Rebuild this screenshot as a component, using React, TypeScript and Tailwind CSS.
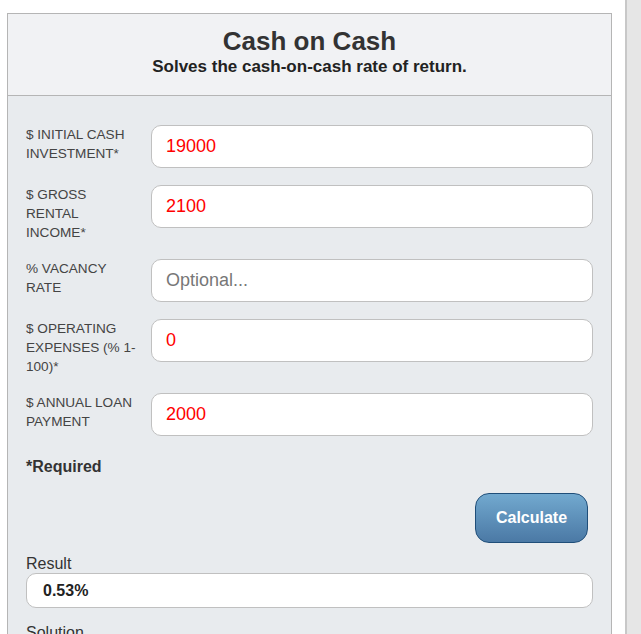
import React from 'react';

const fields = [
  { label: '$ INITIAL CASH INVESTMENT*', value: '19000' },
  { label: '$ GROSS RENTAL INCOME*', value: '2100' },
  { label: '% VACANCY RATE', value: '' },
  { label: '$ OPERATING EXPENSES (% 1-100)*', value: '0' },
  { label: '$ ANNUAL LOAN PAYMENT', value: '2000' },
];

export default function App() {
  return (
    <div
      className="flex h-[634px] w-[641px] overflow-hidden bg-white text-[#333]"
      style={{ fontFamily: '"Liberation Sans", Arial, sans-serif' }}
    >
      <div className="flex-1 pl-[7px] pt-[13px]">
        {/* calculator panel */}
        <div className="w-[605px] border border-[#b5b5b5] bg-[#e8ebee]">
          <div className="flex h-[82px] flex-col items-center border-b border-[#b5b5b5] bg-[#f1f2f4] pt-[12px]">
            <h1 className="text-[26px] font-bold leading-[30px] text-[#333]">Cash on Cash</h1>
            <p className="mt-[1px] text-[17px] font-bold leading-[20px] text-[#222]">
              Solves the cash-on-cash rate of return.
            </p>
          </div>

          <div className="px-[18px] pt-[29px]">
            {fields.map((f) => (
              <div key={f.label} className="mb-[17px] flex items-start">
                <label className="w-[112px] shrink-0 text-[13.6px] leading-[19px] text-[#444]">
                  {f.label}
                </label>
                <input
                  readOnly
                  value={f.value}
                  placeholder="Optional..."
                  className="ml-[13px] h-[43px] flex-1 rounded-[10px] border border-[#c0c0c0] bg-white px-[14px] text-[18px] text-[#ff0000] outline-none placeholder:text-[#777]"
                />
              </div>
            ))}

            <div className="-mt-[2px] text-[16px] font-bold leading-[32px] text-[#333]">*Required</div>

            <div className="mt-[10px] flex justify-end pr-[5px]">
              <button className="h-[50px] w-[113px] rounded-[14px] border border-[#1f4e79] bg-gradient-to-b from-[#72a9cf] to-[#4b79a5] text-[16px] font-bold text-white">
                Calculate
              </button>
            </div>

            <div className="mt-[12px] text-[16px] leading-[18px] text-[#333]">Result</div>
            <div className="flex h-[35px] items-center rounded-[10px] border border-[#c0c0c0] bg-white px-[16px] text-[16px] font-bold text-[#222]">
              0.53%
            </div>
            <div className="mt-[16px] text-[16px] leading-[18px] text-[#333]">Solution</div>
            <div className="h-[40px]" />
          </div>
        </div>
      </div>
      {/* page scrollbar track */}
      <div className="h-full w-[16px] shrink-0 border-l-2 border-[#c8c8c8] bg-[#e6e6e6]" />
    </div>
  );
}
